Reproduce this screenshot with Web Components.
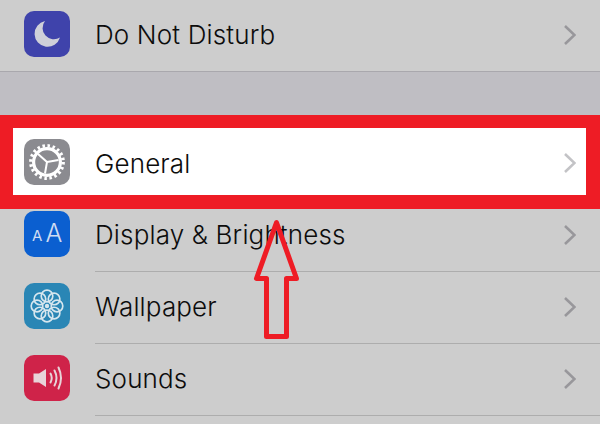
<!DOCTYPE html>
<html>
<head>
<meta charset="utf-8">
<title>Settings</title>
<style>
  html, body { margin: 0; height: 100%; overflow: hidden; background: #cdcdcd; }
</style>
</head>
<body>
<settings-page>
  <settings-row label="Do Not Disturb" full-line>
    <settings-icon slot="icon" style="--tile:#3f43ab">
      <svg viewBox="0 0 46 46" width="46" height="46"><path d="M21 10A13 13 0 1 0 36 26.5 11.3 11.3 0 0 1 21 10Z" fill="#cfd0d9"/></svg>
    </settings-icon>
  </settings-row>
  <settings-gap></settings-gap>
  <settings-row label="General" selected>
    <settings-icon slot="icon" style="--tile:#8b8b90">
      <svg viewBox="0 0 46 46" width="46" height="46" fill="none" stroke="#fff">
        <circle cx="23" cy="23" r="13.4" stroke-width="3.2"/>
        <circle cx="23" cy="23" r="16.2" stroke-width="3.4" stroke-dasharray="2.5 2.59"/>
        <path d="M23 23L34.5 21M23 23L21 34.5M23 23L14 15" stroke-width="2"/>
      </svg>
    </settings-icon>
  </settings-row>
  <settings-row label="Display &amp; Brightness">
    <settings-icon slot="icon" style="--tile:#0b5fd0">
      <svg viewBox="0 0 46 46" width="46" height="46" fill="#cfdcf2" font-family="Inter, 'Liberation Sans', sans-serif">
        <text x="8" y="30" font-size="15">A</text>
        <text x="21.5" y="31" font-size="25" font-weight="300">A</text>
      </svg>
    </settings-icon>
  </settings-row>
  <settings-row label="Wallpaper">
    <settings-icon slot="icon" style="--tile:#2a86b5">
      <svg viewBox="-23 -23 46 46" width="46" height="46" fill="none" stroke="#d6e6ee" stroke-width="1.7">
        <circle cx="0" cy="-10" r="5.8"/>
        <circle cx="7.07" cy="-7.07" r="5.8"/>
        <circle cx="10" cy="0" r="5.8"/>
        <circle cx="7.07" cy="7.07" r="5.8"/>
        <circle cx="0" cy="10" r="5.8"/>
        <circle cx="-7.07" cy="7.07" r="5.8"/>
        <circle cx="-10" cy="0" r="5.8"/>
        <circle cx="-7.07" cy="-7.07" r="5.8"/>
        <circle r="2.2" fill="#d6e6ee" stroke="none"/>
      </svg>
    </settings-icon>
  </settings-row>
  <settings-row label="Sounds">
    <settings-icon slot="icon" style="--tile:#cf2349">
      <svg viewBox="0 0 46 46" width="46" height="46" fill="none" stroke="#e8d3d8" stroke-width="2" stroke-linecap="round">
        <path d="M9.5 18.5H15L22 14V32L15 27.5H9.5Z" fill="#e8d3d8" stroke="none"/>
        <path d="M26.5 18.5Q29 23 26.5 27.5"/>
        <path d="M30.5 15.5Q34.5 23 30.5 30.5"/>
        <path d="M34.5 12.5Q39.5 23 34.5 33.5"/>
      </svg>
    </settings-icon>
  </settings-row>
  <highlight-frame></highlight-frame>
  <pointer-arrow></pointer-arrow>
</settings-page>

<script>
class SettingsPage extends HTMLElement {
  constructor() {
    super();
    this.attachShadow({ mode: "open" });
    this.shadowRoot.innerHTML = `
      <style>
        :host {
          display: flex;
          flex-direction: column;
          position: relative;
          width: 600px;
          height: 424px;
          overflow: hidden;
          background: #cdcdcd;
          color: #0c0c0c;
          font-family: "Inter", "Liberation Sans", sans-serif;
        }
      </style>
      <slot></slot>
    `;
  }
}
customElements.define("settings-page", SettingsPage);

class SettingsGap extends HTMLElement {
  constructor() {
    super();
    this.attachShadow({ mode: "open" });
    this.shadowRoot.innerHTML = `
      <style>
        :host { display: block; height: 56px; background: #bfbec3; }
      </style>
    `;
  }
}
customElements.define("settings-gap", SettingsGap);

class SettingsIcon extends HTMLElement {
  constructor() {
    super();
    this.attachShadow({ mode: "open" });
    this.shadowRoot.innerHTML = `
      <style>
        :host {
          display: block;
          width: 46px;
          height: 46px;
          border-radius: 10px;
          background: var(--tile);
          overflow: hidden;
        }
        ::slotted(svg) { display: block; }
      </style>
      <slot></slot>
    `;
  }
}
customElements.define("settings-icon", SettingsIcon);

class SettingsRow extends HTMLElement {
  constructor() {
    super();
    this.attachShadow({ mode: "open" });
    this.shadowRoot.innerHTML = `
      <style>
        :host {
          display: flex;
          align-items: stretch;
          height: 72px;
          flex: none;
          padding-left: 24px;
          box-sizing: border-box;
        }
        :host([selected]) { background: #fff; }
        :host([full-line]) { padding-left: 0; border-bottom: 1.5px solid #a9a8ad; }
        :host([full-line]) .icon { margin-left: 24px; padding-bottom: 2.5px; }
        :host([full-line]) .body { border-bottom: 0; }
        .icon { display: flex; align-items: center; padding-bottom: 4px; margin-right: 25px; }
        .body {
          flex: 1;
          display: flex;
          align-items: center;
          justify-content: space-between;
          padding: 0 24px 2px 0;
          border-bottom: 1.5px solid #adadad;
        }
        :host([selected]) .body { border-bottom: 0; }
        .label { font-size: 26px; font-weight: 350; letter-spacing: 0.15px; white-space: nowrap; }
        svg { stroke: #98979b; }
        :host([selected]) svg { stroke: #c3c3c6; }
      </style>
      <div class="icon"><slot name="icon"></slot></div>
      <div class="body">
        <span class="label"></span>
        <svg width="12" height="20" viewBox="0 0 12 20" fill="none" stroke-width="2.6"><path d="M1 1L10.5 10L1 19"/></svg>
      </div>
    `;
    this.shadowRoot.querySelector(".label").textContent = this.getAttribute("label");
  }
}
customElements.define("settings-row", SettingsRow);

// red annotation drawn on top of the screenshot
class HighlightFrame extends HTMLElement {
  constructor() {
    super();
    this.attachShadow({ mode: "open" });
    this.shadowRoot.innerHTML = `
      <style>
        :host {
          position: absolute;
          left: 0;
          top: 115px;
          width: 600px;
          height: 94px;
          box-sizing: border-box;
          border: solid #ee1c25;
          border-width: 13px 14px 14px 13px;
        }
      </style>
    `;
  }
}
customElements.define("highlight-frame", HighlightFrame);

class PointerArrow extends HTMLElement {
  constructor() {
    super();
    this.attachShadow({ mode: "open" });
    this.shadowRoot.innerHTML = `
      <style>
        :host { position: absolute; left: 250px; top: 215px; width: 54px; height: 130px; }
        svg { display: block; }
      </style>
      <svg width="54" height="130" viewBox="250 215 54 130" fill="none" stroke="#ee1c25" stroke-width="5" stroke-linejoin="round">
        <path d="M276.5 222.5L256.5 278.5H266.5V336.5H286.5V278.5H296.5Z"/>
      </svg>
    `;
  }
}
customElements.define("pointer-arrow", PointerArrow);
</script>
</body>
</html>
